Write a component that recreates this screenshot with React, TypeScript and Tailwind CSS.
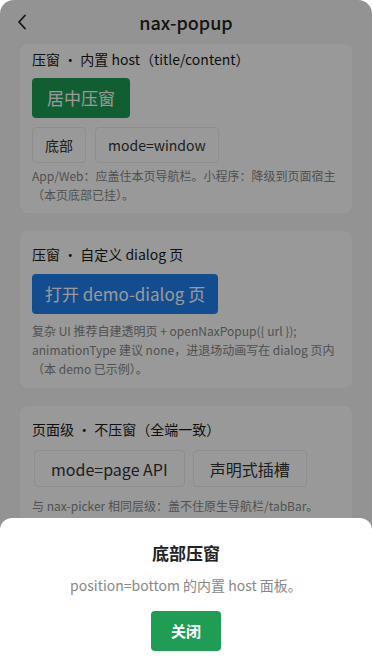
import React from 'react'

const font = { fontFamily: '"Noto Sans CJK SC", "Noto Sans", sans-serif' }

function Card({ className, children }: { className?: string; children: React.ReactNode }) {
  return <div className={`bg-white rounded-[8px] px-3 ${className ?? ''}`}>{children}</div>
}

function Title({ children }: { children: React.ReactNode }) {
  return <div className="text-[14px] leading-[20px] font-normal text-[#1a1a1a]">{children}</div>
}

function Note({ children }: { children: React.ReactNode }) {
  return <p className="text-[12px] leading-[19px] text-[#888]">{children}</p>
}

export default function App() {
  return (
    <div className="w-[372px] h-[667px] bg-white" style={font}>
      <div className="relative w-full h-full overflow-hidden rounded-t-[14px] bg-[#f5f5f5]">
        <div className="h-[44px] flex items-center justify-center relative">
          <svg
            className="absolute left-[16px] top-[12px]"
            width="14"
            height="20"
            viewBox="0 0 14 20"
            fill="none"
            stroke="#222"
            strokeWidth="1.8"
            strokeLinecap="round"
            strokeLinejoin="round"
          >
            <path d="M9 3.5 L3 10 L9 16.5" />
          </svg>
          <span className="text-[18px] font-medium text-[#222]">nax-popup</span>
        </div>

        <div className="px-5 flex flex-col gap-[18px]">
          <Card className="pt-[5px] pb-[9px]">
            <Title>压窗 · 内置 host（title/content）</Title>
            <button className="mt-[9px] h-[40px] px-[15px] rounded-[4px] bg-[#1f9d55] text-white text-[17px]">
              居中压窗
            </button>
            <div className="mt-[9px] flex gap-[9px]">
              <button className="h-[36px] px-3 rounded-[4px] border border-[#ededed] bg-white text-[14px] text-[#333]">
                底部
              </button>
              <button className="h-[36px] px-3 rounded-[4px] border border-[#ededed] bg-white text-[14px] text-[#333]">
                mode=window
              </button>
            </div>
            <div className="mt-[3px]">
              <Note>App/Web：应盖住本页导航栏。小程序：降级到页面宿主（本页底部已挂）。</Note>
            </div>
          </Card>

          <Card className="pt-[13px] pb-[10px]">
            <Title>压窗 · 自定义 dialog 页</Title>
            <button className="mt-[10px] h-[40px] px-[13px] rounded-[4px] bg-[#2080f0] text-white text-[17px]">
              打开 demo-dialog 页
            </button>
            <div className="mt-[7px]">
              <Note>
                复杂 UI 推荐自建透明页 + openNaxPopup({'{'} url {'}'});
                animationType 建议 none，进退场动画写在 dialog 页内（本 demo 已示例）。
              </Note>
            </div>
          </Card>

          <Card className="pt-[13px] pb-[12px]">
            <Title>页面级 · 不压窗（全端一致）</Title>
            <div className="mt-[11px] ml-[2px] flex gap-[8px]">
              <button className="h-[37px] px-[16px] rounded-[4px] border border-[#ededed] bg-white text-[16px] text-[#333]">
                mode=page API
              </button>
              <button className="h-[37px] px-[16px] rounded-[4px] border border-[#ededed] bg-white text-[16px] text-[#333]">
                声明式插槽
              </button>
            </div>
            <div className="mt-[9px]">
              <Note>与 nax-picker 相同层级：盖不住原生导航栏/tabBar。</Note>
            </div>
          </Card>
        </div>

        <div className="absolute inset-0 bg-black/40" />

        <div className="absolute left-0 right-0 bottom-0 h-[149px] bg-white rounded-t-[12px] flex flex-col items-center pt-[25px]">
          <div className="text-[17px] leading-[20px] font-bold text-[#222]">底部压窗</div>
          <div className="mt-[12px] text-[14px] leading-[20px] text-[#888]">position=bottom 的内置 host 面板。</div>
          <button className="mt-[16px] w-[70px] h-[40px] rounded-[4px] bg-[#1f9d55] text-white text-[15px] font-bold">
            关闭
          </button>
        </div>
      </div>
    </div>
  )
}
